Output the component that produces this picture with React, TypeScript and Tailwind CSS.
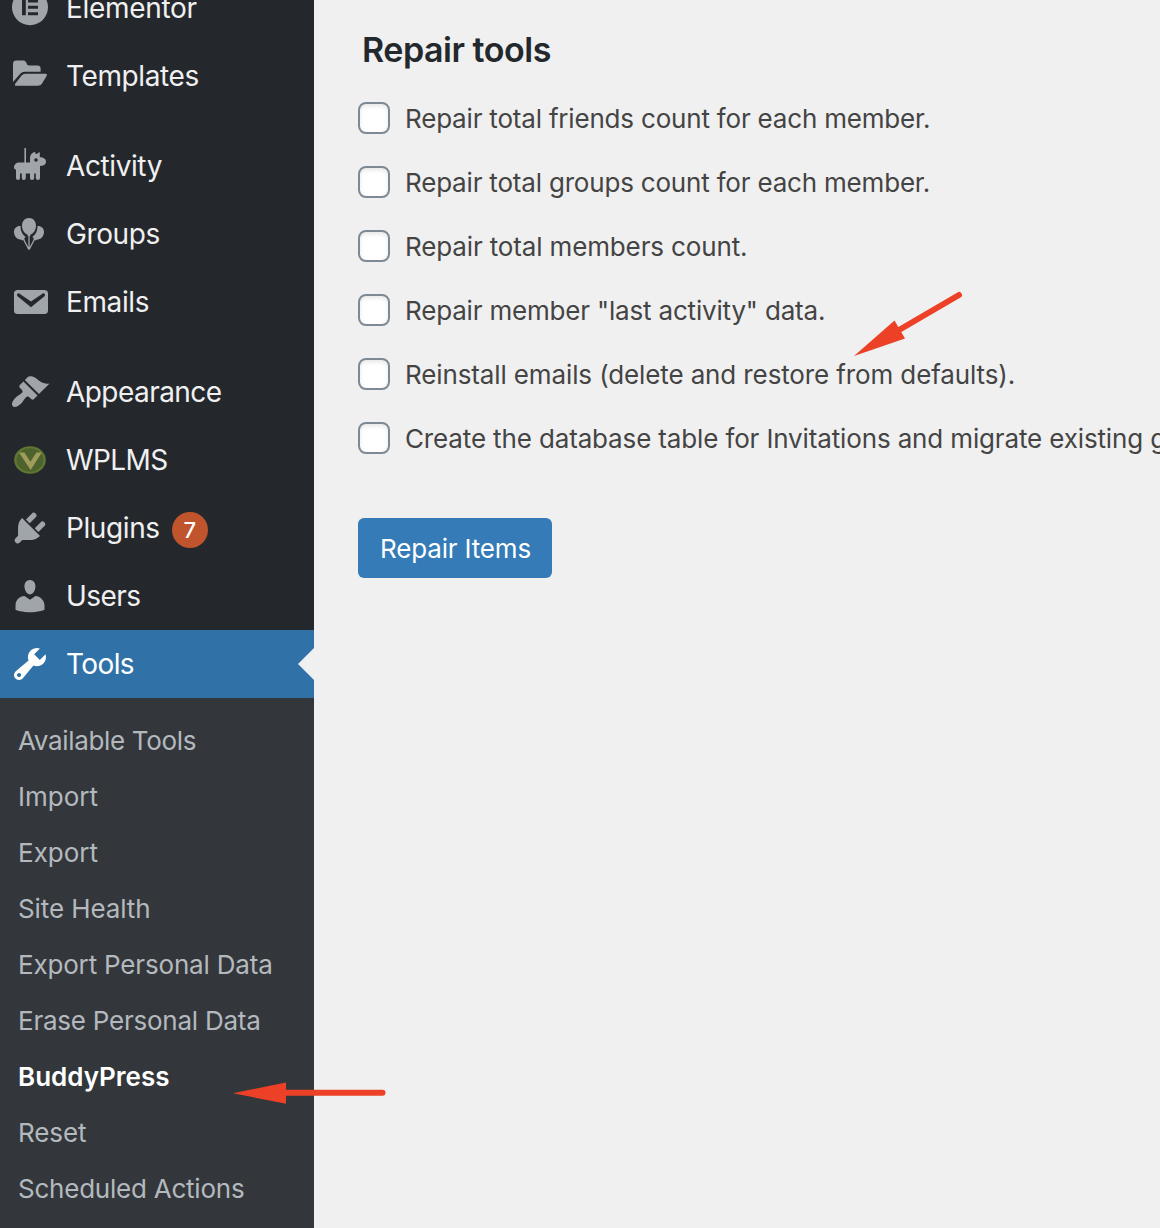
import React from "react";

const P = {
  email:
    "M3.87 4h13.25C18.37 4 19 4.59 19 5.79v8.42c0 1.19-.63 1.79-1.88 1.79H3.87c-1.25 0-1.88-.6-1.88-1.79V5.79c0-1.2.63-1.79 1.88-1.79zm6.62 8.6l6.74-5.53c.24-.2.43-.66.13-1.07-.29-.41-.82-.42-1.17-.17l-5.7 3.86L4.8 5.83c-.35-.25-.88-.24-1.17.17-.3.41-.11.87.13 1.07z",
  brush:
    "M14.48 11.06L7.41 3.99l1.5-1.5c.5-.56 2.3-.47 3.51.32 1.21.8 1.43 1.28 2.91 2.1 1.18.64 2.45 1.26 4.45.85zm-.71.71L6.7 4.7 4.93 6.47c-.39.39-.39 1.02 0 1.41l1.06 1.06c.39.39.39 1.03 0 1.42-.6.6-1.43 1.11-2.21 1.69-.35.26-.7.53-1.01.84C1.43 14.23.4 16.08 1.4 17.07c.99 1 2.84-.03 4.18-1.36.31-.31.58-.66.85-1.02.57-.78 1.08-1.61 1.69-2.21.39-.39 1.02-.39 1.41 0l1.06 1.06c.39.39 1.02.39 1.41 0z",
  plug:
    "M13.11 4.36L9.87 7.6 8 5.73l3.24-3.24c.35-.34 1.05-.2 1.56.32.52.51.66 1.21.31 1.55zm-8 1.77l.91-1.12 9.01 9.01-1.19.84c-.71.71-2.63 1.16-3.82 1.16H6.14L4.9 17.26c-.59.59-1.54.59-2.12 0-.59-.58-.59-1.53 0-2.12l1.24-1.24v-3.88c0-1.13.4-3.19 1.09-3.89zm7.26 3.97l3.24-3.24c.34-.35 1.04-.21 1.55.31.52.51.66 1.21.31 1.55l-3.24 3.25z",
  user:
    "M10 9.25c-2.27 0-2.73-3.44-2.73-3.44C7 4.02 7.82 2 9.97 2c2.16 0 2.98 2.02 2.71 3.81 0 0-.41 3.44-2.68 3.44zm0 2.57L12.72 10c2.39 0 4.52 2.33 4.52 4.53v2.49s-3.65 1.13-7.24 1.13c-3.65 0-7.24-1.13-7.24-1.13v-2.49c0-2.25 1.94-4.48 4.47-4.48z",
  wrench:
    "M16.68 9.77c-1.34 1.34-3.3 1.67-4.95.99l-5.41 6.52c-.99.99-2.59.99-3.58 0s-.99-2.59 0-3.57l6.52-5.42c-.68-1.65-.35-3.61.99-4.95 1.28-1.28 3.12-1.62 4.72-1.06l-2.89 2.89 2.82 2.82 2.86-2.87c.53 1.58.18 3.39-1.08 4.65zM3.81 16.21c.4.39 1.04.39 1.43 0 .4-.4.4-1.04 0-1.43-.39-.4-1.03-.4-1.43 0-.39.39-.39 1.03 0 1.43z",
};

function Icon({ d, children }: { d?: string; children?: React.ReactNode }) {
  return (
    <svg viewBox="0 0 20 20" className="ml-[10px] size-10 shrink-0 overflow-visible" fill="currentColor">
      {d ? <path d={d} /> : children}
    </svg>
  );
}

const elementor = (
  <Icon>
    <path
      fillRule="evenodd"
      d="M10 .6a9 9 0 1 0 0 18 9 9 0 0 0 0-18zM6 5.700h1.900v7.900H6zM9 5.700h5v1.500H9zM9 8.900h5v1.500H9zM9 12.100h5v1.500H9z"
    />
  </Icon>
);
const folder = (
  <Icon>
    <path d="M1.500 12.500V3.900Q1.500 2.200 3.200 2.200H6.600Q7.700 2.200 8.100 3.200 8.500 4.700 9.600 4.700H13.700Q15.300 4.700 15.300 6.300V7.900H7.400Q6 7.900 5 9L1.500 13z" />
    <path d="M5.800 9.800Q6.600 8.900 7.700 8.900H17.600Q18.900 8.900 18.300 10L16 13.800Q15.300 14.900 13.900 14.900H3.100Q2 14.900 2.700 13.700z" />
  </Icon>
);
const pony = (
  <Icon>
    <path
      fillRule="evenodd"
      d="M7.200 1H8V8.200H10V6.200C10 4.400 11.200 3.100 12.500 3L13 4.100 14.900 3V5.600C16.700 5.600 18 6.400 18 7.800 18 9.300 16.900 10 15 10V16Q15 17 14 17 12.900 17 12.900 16V13.700H12.100V16Q12.100 17 11 17 10 17 10 16V13.700H7.900V16Q7.900 17 6.900 17 5.900 17 5.900 16V13.700H5V16Q5 17 4 17 3 17 3 16V11.800Q2 11.900 2 10.900C2 9.200 3 8.200 4.800 8.200H7.200zM13 6.100a.9.9 0 1 0 0 1.800A.9.9 0 0 0 13 6.100z"
    />
  </Icon>
);
const balloons = (
  <Icon>
    <path d="M9.500 2C7.300 2 6 3.700 6 5.900 6 8.100 7.300 9.800 8.900 10.400L8.800 11H10.200L10.100 10.400C11.700 9.800 13 8.100 13 5.900 13 3.700 11.700 2 9.500 2z" />
    <path d="M5.300 6C3.300 5.900 2 7.200 2 9c0 2.200 1.600 3.800 3.700 3.900l.5.4 1-.5.1-.9.600-.4C6.200 10.400 5.200 8.500 5.300 6zM13.700 6c2-.1 3.300 1.200 3.300 3 0 2.200-1.600 3.800-3.700 3.900l-.5.4-1-.5-.1-.9-.6-.4C12.800 10.400 13.800 8.500 13.700 6z" />
    <path d="M9.500 10.500V17.500M6.700 12.500L9.300 17.500M12.300 12.500L9.700 17.500" stroke="currentColor" strokeWidth=".65" strokeLinecap="round" />
  </Icon>
);
const wplms = (
  <Icon>
    <ellipse cx="10" cy="10" rx="7.900" ry="6.900" fill="#5f7733" />
    <ellipse cx="10" cy="10" rx="6.700" ry="5.900" fill="#4d622d" />
    <path d="M4.500 6.300H7.200L10.200 10.900 13.200 6.300H15.900L10.300 15z" fill="#9f9d5c" />
  </Icon>
);

type Item = { label: string; cls: string; icon: React.ReactNode; badge?: string };
const groups: Item[][] = [
  [
    { label: "Elementor", cls: "tracking-[-0.3px]", icon: elementor },
    { label: "Templates", cls: "tracking-[-0.4px]", icon: folder },
  ],
  [
    { label: "Activity", cls: "tracking-[-0.4px]", icon: pony },
    { label: "Groups", cls: "tracking-[-0.4px]", icon: balloons },
    { label: "Emails", cls: "tracking-[-0.4px]", icon: <Icon d={P.email} /> },
  ],
  [
    { label: "Appearance", cls: "tracking-[-0.55px]", icon: <Icon d={P.brush} /> },
    { label: "WPLMS", cls: "tracking-[-0.6px]", icon: wplms },
    { label: "Plugins", cls: "tracking-[-0.4px]", icon: <Icon d={P.plug} />, badge: "7" },
    { label: "Users", cls: "tracking-[-0.55px]", icon: <Icon d={P.user} /> },
  ],
];

const submenu = [
  { label: "Available Tools", cls: "tracking-[-0.33px] text-[#b4b9be]" },
  { label: "Import", cls: "text-[#b4b9be]" },
  { label: "Export", cls: "text-[#b4b9be]" },
  { label: "Site Health", cls: "tracking-[-0.1px] text-[#b4b9be]" },
  { label: "Export Personal Data", cls: "tracking-[-0.18px] text-[#b4b9be]" },
  { label: "Erase Personal Data", cls: "tracking-[-0.24px] text-[#b4b9be]" },
  { label: "BuddyPress", cls: "font-semibold text-white" },
  { label: "Reset", cls: "tracking-[-0.1px] text-[#b4b9be]" },
  { label: "Scheduled Actions", cls: "tracking-[-0.23px] text-[#b4b9be]" },
];

const repairs = [
  { label: "Repair total friends count for each member.", cls: "tracking-[-0.19px]" },
  { label: "Repair total groups count for each member.", cls: "tracking-[-0.19px]" },
  { label: "Repair total members count.", cls: "tracking-[-0.14px]" },
  { label: 'Repair member "last activity" data.', cls: "tracking-[-0.18px]" },
  { label: "Reinstall emails (delete and restore from defaults).", cls: "tracking-[-0.12px]" },
  { label: "Create the database table for Invitations and migrate existing g", cls: "tracking-[-0.14px]" },
];

export default function App() {
  return (
    <div className="relative flex h-[1228px] w-[1160px] overflow-hidden bg-[#f0f0f0] font-['Inter',sans-serif]">
      <aside className="flex h-full w-[314px] shrink-0 flex-col bg-[#24282d]">
        <nav className="-mt-[26px] flex flex-col gap-[22px]">
          {groups.map((g, i) => (
            <ul key={i}>
              {g.map((it) => (
                <li key={it.label} className="flex h-[68px] items-center text-[#a0a5aa]">
                  {it.icon}
                  <span className={`ml-4 text-[28px] leading-9 text-[#f0f0f1] ${it.cls}`}>{it.label}</span>
                  {it.badge && (
                    <span className="mt-1 ml-3 flex size-9 items-center justify-center rounded-full bg-[#bf542d] text-[22px] font-medium text-white">
                      {it.badge}
                    </span>
                  )}
                </li>
              ))}
            </ul>
          ))}
        </nav>
        <div className="flex h-[68px] shrink-0 items-center bg-[#3072a7] text-white">
          <Icon d={P.wrench} />
          <span className="ml-4 text-[28px] leading-9 tracking-[-0.6px]">Tools</span>
          <svg viewBox="0 0 16 32" className="ml-auto h-8 w-4" fill="#f0f0f0">
            <path d="M16 0v32L0 16z" />
          </svg>
        </div>
        <ul className="flex-1 bg-[#33373c] pt-[14px]">
          {submenu.map((s) => (
            <li key={s.label} className={`flex h-14 items-center pl-[18px] text-[26px] whitespace-nowrap ${s.cls}`}>
              {s.label}
            </li>
          ))}
        </ul>
      </aside>
      <main className="min-w-0 flex-1 pl-11">
        <h2 className="mt-[30px] ml-1 h-10 text-[34px] leading-10 font-semibold tracking-[-0.47px] whitespace-nowrap text-[#23282d]">
          Repair tools
        </h2>
        <div className="mt-4">
          {repairs.map((r) => (
            <label key={r.label} className="flex h-16 items-center whitespace-nowrap text-[#444]">
              <input
                type="checkbox"
                className="size-8 shrink-0 appearance-none rounded-lg border-2 border-[#7e8993] bg-white shadow-[inset_0_2px_4px_rgba(0,0,0,0.1)]"
              />
              <span className={`ml-[15px] text-[26px] ${r.cls}`}>{r.label}</span>
            </label>
          ))}
        </div>
        <button className="mt-12 h-[60px] w-[194px] rounded-md bg-[#357bb7] pl-px text-[26px] tracking-[-0.17px] whitespace-nowrap text-white">
          Repair Items
        </button>
      </main>
      <svg viewBox="0 0 110 70" className="absolute top-[288px] left-[854px] h-[70px] w-[110px]" fill="#ec4127">
        <path d="M105 7L45 42" stroke="#ec4127" strokeWidth="6" strokeLinecap="round" />
        <path d="M0 68L40.500 32.500 51 50.500z" />
      </svg>
      <svg viewBox="0 0 160 24" className="absolute top-[1081px] left-[230px] h-6 w-40" fill="#ec4127">
        <path d="M152.500 11.800H50" stroke="#ec4127" strokeWidth="6" strokeLinecap="round" />
        <path d="M3 12.300L56 1.500V22.800z" />
      </svg>
    </div>
  );
}
